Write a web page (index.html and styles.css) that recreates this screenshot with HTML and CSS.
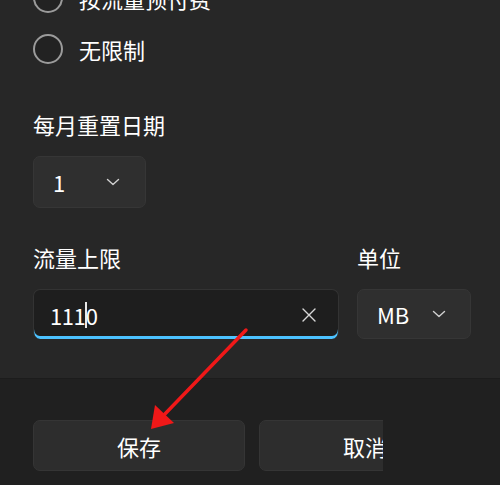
FILE: index.html
```html
<!DOCTYPE html>
<html lang="zh">
<head>
<meta charset="utf-8">
<link rel="stylesheet" href="styles.css">
</head>
<body>
<div class="page">
  <div class="content">
    <div class="radios">
      <div class="radio-row"><span class="radio"></span><span class="radio-label">按流量预付费</span></div>
      <div class="radio-row"><span class="radio"></span><span class="radio-label">无限制</span></div>
    </div>

    <div class="field">
      <div class="label">每月重置日期</div>
      <div class="combo combo-day">
        <span class="combo-value">1</span>
        <svg class="chev" width="14" height="8" viewBox="0 0 14 8"><path d="M1.5 1.5 L7 6.5 L12.5 1.5" fill="none" stroke="#d0d0d0" stroke-width="1.4" stroke-linecap="round" stroke-linejoin="round"/></svg>
      </div>
    </div>

    <div class="row-limit">
      <div class="field grow">
        <div class="label">流量上限</div>
        <div class="textbox">
          <span class="tb-text">111<span class="caret"></span>0</span>
          <svg class="clear" width="14" height="14" viewBox="0 0 14 14"><path d="M1 1 L13 13 M13 1 L1 13" fill="none" stroke="#d8d8d8" stroke-width="1.4" stroke-linecap="round"/></svg>
        </div>
      </div>
      <div class="field">
        <div class="label">单位</div>
        <div class="combo combo-unit">
          <span class="combo-value">MB</span>
          <svg class="chev" width="14" height="8" viewBox="0 0 14 8"><path d="M1.5 1.5 L7 6.5 L12.5 1.5" fill="none" stroke="#d0d0d0" stroke-width="1.4" stroke-linecap="round" stroke-linejoin="round"/></svg>
        </div>
      </div>
    </div>
  </div>

  <div class="footer">
    <button class="btn">保存</button>
    <div class="clip"><button class="btn">取消</button></div>
  </div>

  <svg class="arrow" width="500" height="485" viewBox="0 0 500 485">
    <line x1="246" y1="330" x2="163" y2="416" stroke="#f01818" stroke-width="3.5" stroke-linecap="round"/>
    <polygon points="151,429 155,405 174,423" fill="#f01818"/>
  </svg>
</div>
</body>
</html>
```

FILE: styles.css
```css
* { box-sizing: border-box; }
html, body {
  margin: 0;
  padding: 0;
  width: 500px;
  height: 485px;
  overflow: hidden;
  background: #272727;
  font-family: "Noto Sans CJK SC", "Noto Sans", sans-serif;
  color: #ffffff;
}
.page {
  position: relative;
  width: 500px;
  height: 485px;
  display: flex;
  flex-direction: column;
}
.content {
  flex: 1;
  padding: 0 29px 0 33px;
}
.radios {
  margin-top: -17px;
  display: flex;
  flex-direction: column;
  gap: 21px;
}
.radio-row {
  display: flex;
  align-items: center;
  height: 30px;
}
.radio {
  width: 30px;
  height: 30px;
  border-radius: 50%;
  border: 2px solid #9b9b9b;
  background: #222;
  flex: none;
}
.radio-label {
  margin-left: 16px;
  font-size: 22px;
  line-height: 30px;
}
.field {
  display: flex;
  flex-direction: column;
}
.radios + .field { margin-top: 45px; }
.label {
  font-size: 22px;
  line-height: 30px;
  margin-bottom: 17px;
}
.combo {
  display: flex;
  align-items: center;
  justify-content: space-between;
  background: #2f2f2f;
  border: 1px solid #363636;
  border-radius: 7px;
  font-size: 22px;
}
.combo-day {
  width: 113px;
  height: 52px;
  padding: 0 25px 0 19px;
}
.combo-unit {
  width: 114px;
  height: 50px;
  padding: 0 24px 0 19px;
}
.combo-value { line-height: 1; }
.row-limit {
  display: flex;
  gap: 18px;
  margin-top: 34px;
}
.grow { width: 306px; }
.textbox {
  position: relative;
  height: 50px;
  background: #1e1e1e;
  border: 1px solid #333;
  border-bottom: none;
  border-radius: 7px;
  display: flex;
  align-items: center;
  justify-content: space-between;
  padding: 0 22px 0 16px;
  overflow: hidden;
  font-size: 22px;
  box-shadow: inset 0 -3px 0 #4cc2ff;
}
.tb-text {
  display: flex;
  align-items: center;
  letter-spacing: -0.5px;
}
.caret {
  display: inline-block;
  width: 1.5px;
  height: 26px;
  background: #e8e8e8;
  margin: 0 -1px 0 0;
}
.footer {
  height: 107px;
  background: #202020;
  border-top: 1px solid #1c1c1c;
  display: flex;
  gap: 14px;
  padding: 41px 0 0 33px;
  align-items: flex-start;
}
.btn {
  width: 212px;
  height: 51px;
  background: #2d2d2d;
  border: 1px solid #353535;
  border-radius: 7px;
  color: #fff;
  font-family: inherit;
  font-size: 22px;
  padding: 0;
  flex: none;
}
.clip {
  width: 124px;
  height: 51px;
  overflow: hidden;
  flex: none;
}
.arrow {
  position: absolute;
  left: 0;
  top: 0;
  pointer-events: none;
}
```
